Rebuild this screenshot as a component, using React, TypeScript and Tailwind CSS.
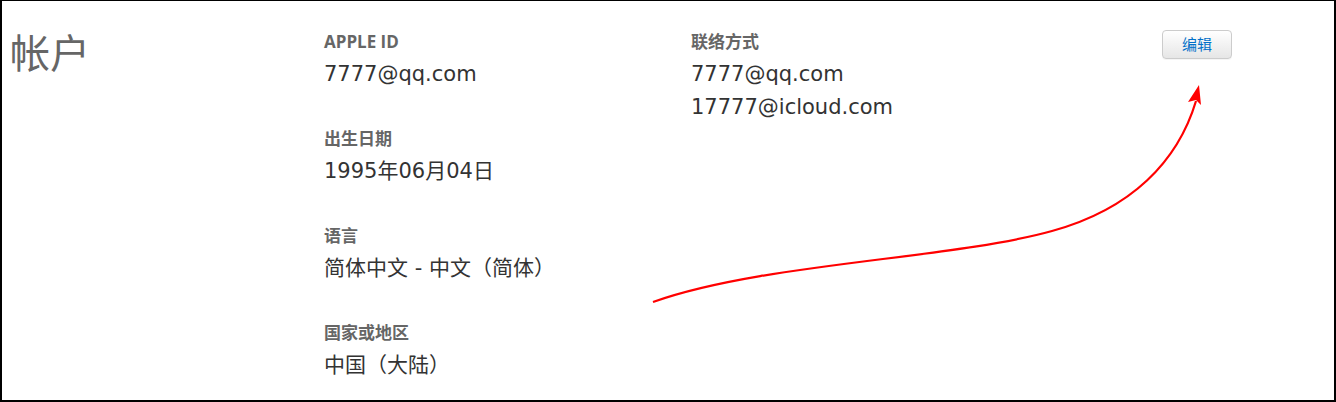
import React from "react";

const FONT = { fontFamily: '"Open Sans", "Noto Sans CJK SC", sans-serif' };
const VALUE_FONT = { fontFamily: '"DejaVu Sans", "Noto Sans CJK SC", sans-serif' };

type Field = { label: string; values: string[] };

const leftFields: Field[] = [
  { label: "APPLE ID", values: ["7777@qq.com"] },
  { label: "出生日期", values: ["1995年06月04日"] },
  { label: "语言", values: ["简体中文 - 中文（简体）"] },
  { label: "国家或地区", values: ["中国（大陆）"] },
];

const contactField: Field = {
  label: "联络方式",
  values: ["7777@qq.com", "17777@icloud.com"],
};

function FieldBlock({ field }: { field: Field }) {
  return (
    <div className="mb-[36px]">
      <p className="text-[17px] font-bold leading-[24px] text-[#666666]">{field.label}</p>
      <div className="mt-[4px]" style={VALUE_FONT}>
        {field.values.map((v) => (
          <p key={v} className="text-[21px] leading-[33px] text-[#333333]">
            {v}
          </p>
        ))}
      </div>
    </div>
  );
}

function Arrow() {
  return (
    <svg
      className="pointer-events-none absolute left-0 top-0"
      width={1336}
      height={402}
      viewBox="0 0 1336 402"
    >
      <path
        d="M651 301 C 760 262, 950 258, 1050 230 C 1130 208, 1176 160, 1194 100"
        fill="none"
        stroke="#ff0000"
        strokeWidth={2.2}
      />
      <polygon points="1197,84 1199,104 1194,99 1186,101" fill="#ff0000" />
    </svg>
  );
}

export default function App() {
  return (
    <div
      className="relative h-[402px] w-[1336px] overflow-hidden border-x-2 border-b-2 border-t border-black bg-white"
      style={FONT}
    >
      <div className="grid grid-cols-[322px_367px_1fr]">
        <div className="pl-[8px] pt-[24px]">
          <h1 className="text-[40px] font-normal leading-[56px] text-[#666666]">帐户</h1>
        </div>

        <div className="pt-[29px]">
          {leftFields.map((f) => (
            <FieldBlock key={f.label} field={f} />
          ))}
        </div>

        <div className="flex items-start justify-between pr-[102px] pt-[29px]">
          <FieldBlock field={contactField} />
          <button
            type="button"
            className="h-[29px] w-[70px] rounded-[4px] border border-[#cccccc] bg-gradient-to-b from-white to-[#e6e6e6] text-[15px] leading-[27px] text-[#0070c9] shadow-[0_1px_0_rgba(0,0,0,0.04)]"
          >
            编辑
          </button>
        </div>
      </div>
      <Arrow />
    </div>
  );
}
